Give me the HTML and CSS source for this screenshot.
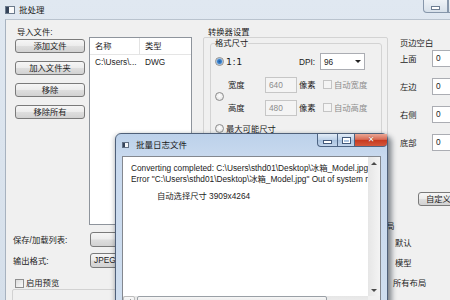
FILE: index.html
```html
<!DOCTYPE html>
<html lang="zh-CN">
<head>
<meta charset="utf-8">
<title>批处理</title>
<link rel="stylesheet" href="styles.css">
</head>
<body>
<div class="win">
  <div class="titlebar">
    <svg class="appicon" width="10" height="8" viewBox="0 0 10 8"><rect x="0.5" y="0.5" width="9" height="7" fill="#fafafa" stroke="#6b7a8c"/><rect x="1" y="1" width="3" height="6" fill="#34435a"/></svg>
    <span class="ttl">批处理</span>
    <div class="capbtns"><span class="cb min"><i></i></span><span class="cb max"></span></div>
  </div>
  <div class="frame">
    <div class="client">
      <div class="leftcol">
        <div class="import">导入文件:</div>
        <div class="filesrow">
          <div class="btncol">
            <button class="btn">添加文件</button>
            <button class="btn">加入文件夹</button>
            <button class="btn">移除</button>
            <button class="btn">移除所有</button>
          </div>
          <div class="list">
            <div class="lhead"><span class="c1">名称</span><span class="c2">类型</span></div>
            <div class="lrow"><span class="c1">C:\Users\...</span><span class="c2">DWG</span></div>
          </div>
        </div>
        <div class="frow"><span class="flabel">保存/加载列表:</span><button class="btn wide"></button></div>
        <div class="frow second"><span class="flabel">输出格式:</span><div class="combo wide">JPEG (*.jpg)</div></div>
        <div class="chkrow"><span class="chk"></span><span>启用预览</span></div>
        <div class="preview"></div>
      </div>

      <div class="convcol">
        <div class="clabel">转换器设置</div>
        <div class="cbox">
          <fieldset class="fmtset">
            <legend>格式尺寸</legend>
            <div class="fmt">
              <span class="radio on r1"></span>
              <span class="one">1:1</span>
              <span class="unit dpi">DPI:</span>
              <div class="dcombo">96<span class="arr"></span></div>

              <span class="radio r2"></span>
              <span class="flbl row2">宽度</span>
              <div class="dis row2">640</div>
              <span class="unit row2">像素</span>
              <span class="auto row2"><span class="chk off"></span><span class="gray">自动宽度</span></span>

              <span class="flbl row3">高度</span>
              <div class="dis row3">480</div>
              <span class="unit row3">像素</span>
              <span class="auto row3"><span class="chk off"></span><span class="gray">自动高度</span></span>

              <span class="radio r3"></span>
              <span class="maxsz">最大可能尺寸</span>
            </div>
          </fieldset>
        </div>
      </div>

      <div class="margcol">
        <div class="mlabel">页边空白</div>
        <div class="mrow first"><span class="ml">上面</span><div class="minput">0</div></div>
        <div class="mrow"><span class="ml">左边</span><div class="minput">0</div></div>
        <div class="mrow"><span class="ml">右侧</span><div class="minput">0</div></div>
        <div class="mrow"><span class="ml">底部</span><div class="minput">0</div></div>
        <button class="btn custom">自定义</button>
        <div class="layout">布局</div>
        <div class="lopt">默认</div>
        <div class="lopt">模型</div>
        <div class="lopt all">所有布局</div>
      </div>
    </div>
  </div>
</div>

<div class="log">
  <div class="lt">
    <svg class="appicon" width="7" height="6" viewBox="0 0 7 6"><rect x="0.5" y="0.5" width="6" height="5" fill="#f4f6f8" stroke="#5f6f84"/><rect x="1" y="1" width="2" height="4" fill="#34435a"/></svg>
    <span class="ltitle">批量日志文件</span>
    <div class="lcaps">
      <span class="lc lmin"><i></i></span>
      <span class="lc lmax"><i></i></span>
      <span class="lc lclose">✕</span>
    </div>
  </div>
  <div class="tbox">
    <div class="txt">
      <div class="ln">Converting completed: C:\Users\sthd01\Desktop\冰箱_Model.jpg</div>
      <div class="ln">Error "C:\Users\sthd01\Desktop\冰箱_Model.jpg" Out of system resources</div>
      <div class="ln sub">自动选择尺寸 3909x4264</div>
    </div>
    <div class="vscroll">
      <span class="sbtn"><i class="up"></i></span>
      <span class="strack"></span>
      <span class="sbtn"><i class="down"></i></span>
    </div>
    <div class="hscroll">
      <span class="sbtn h"><i class="left"></i></span>
      <span class="hthumb"><i></i></span>
    </div>
    <div class="corner"></div>
  </div>
</div>
</body>
</html>
```
FILE: styles.css
```css
* { box-sizing: border-box; }
html, body { margin: 0; padding: 0; }
body {
  width: 450px; height: 300px; overflow: hidden; position: relative;
  background: #f0f0f0;
  font-family: "Liberation Sans", "Noto Sans CJK SC", sans-serif;
  font-size: 8.3px; line-height: 10px; color: #1c1c1c;
}
.win {
  width: 450px; height: 300px; overflow: hidden;
  display: flex; flex-direction: column;
  background: linear-gradient(#e0e8f1, #d5dfea);
}
.titlebar { height: 19px; flex: none; display: flex; align-items: center; padding-left: 5px; }
.appicon { display: block; flex: none; }
.ttl { margin-left: 4px; font-size: 8.5px; color: #202020; }
.capbtns { margin-left: auto; margin-right: -23px; align-self: flex-start; display: flex; height: 13px; }
.cb {
  display: flex; align-items: flex-end; justify-content: center; padding-bottom: 3px;
  height: 13px; width: 25px; border: 1px solid #8797ab; border-top: none;
  background: linear-gradient(#eef2f7, #d7e0ea);
}
.cb.min { border-radius: 0 0 0 4px; }
.cb.min i { display: block; width: 7px; height: 2px; background: #fff; outline: 1px solid #6d7d92; }

.frame { flex: 1; display: flex; padding-left: 5px; min-height: 0; }
.client {
  flex: 1; display: flex; min-width: 0;
  background: #f0f0f0;
  border-left: 1px solid #a7b2bf; border-top: 1px solid #b9c3ce;
}

/* left column */
.leftcol { width: 191px; flex: none; padding-left: 7px; display: flex; flex-direction: column; }
.import { margin-top: 7px; height: 10px; padding-left: 4px; }
.filesrow { display: flex; gap: 4px; padding-left: 2px; height: 188px; flex: none; }
.btncol { width: 70px; flex: none; display: flex; flex-direction: column; gap: 8px; padding-top: 2px; }
.btn {
  height: 14px; padding: 0; margin: 0;
  font: inherit; color: #1c1c1c;
  border: 1px solid #7a7a7a; border-radius: 3px;
  background: linear-gradient(#f6f6f6, #ececec 48%, #dedede 52%, #d2d2d2);
}
.list { width: 103px; flex: none; background: #fff; border: 1px solid #8e949c; }
.lhead { display: flex; height: 17px; align-items: center; border-bottom: 1px solid #e5e5e5; }
.lrow { display: flex; height: 14px; align-items: center; }
.c1 { width: 50px; padding-left: 5px; flex: none; white-space: nowrap; }
.lhead .c1 { border-right: 1px solid #e3e3e3; height: 17px; line-height: 17px; }
.c2 { padding-left: 5px; }
.frow { display: flex; align-items: center; height: 15px; margin-top: 7px; flex: none; }
.frow.second { margin-top: 6px; }
.flabel { width: 77px; flex: none; }
.wide { width: 110px; height: 15px; flex: none; }
.combo {
  border: 1px solid #7a7a7a; border-radius: 3px; padding-left: 3px; line-height: 13px;
  background: linear-gradient(#f6f6f6, #ececec 48%, #dedede 52%, #d2d2d2);
  white-space: nowrap;
}
.chkrow { display: flex; align-items: center; gap: 2px; margin-top: 10px; padding-left: 2px; height: 10px; flex: none; }
.chk {
  display: block; width: 9px; height: 9px; flex: none;
  border: 1px solid #8f8f8f;
  background: linear-gradient(135deg, #dcdcdc, #fbfbfb);
}
.chk.off { border-color: #c4c4c4; background: #f4f4f4; }
.preview { margin-top: 1px; margin-left: -1px; height: 20px; border: 1px solid #d2d2d2; border-radius: 2px; flex: none; }

/* converter column */
.convcol { width: 185px; flex: none; margin-left: 6px; display: flex; flex-direction: column; }
.clabel { margin-top: 7px; height: 10px; padding-left: 5px; }
.cbox { border: 1px solid #d3d3d3; border-radius: 2px; height: 220px; padding: 0 5px 0 6px; }
.fmtset { margin: 0; padding: 5px 4px 30px 4px; border: 1px solid #d3d3d3; border-radius: 3px; min-width: 0; }
.fmtset legend { padding: 0; height: 10px; line-height: 10px; }
.fmt {
  display: grid;
  grid-template-columns: 11px 39px 34px 21px 1fr;
  grid-template-rows: 17px 17px 17px 13px;
  row-gap: 6px; align-items: center;
}
.radio {
  display: block; width: 9px; height: 9px; border-radius: 50%;
  border: 1px solid #8c8c8c;
  background: radial-gradient(circle at 50% 40%, #ffffff, #dcdcdc);
}
.radio.on { background: radial-gradient(circle, #1f5fa8 0, #3d83cc 2px, #9cc1e6 3px, #f2f2f2 3.5px, #e0e0e0); }
.r1 { grid-column: 1; grid-row: 1; }
.r2 { grid-column: 1; grid-row: 2 / 4; }
.r3 { grid-column: 1; grid-row: 4; }
.one { grid-column: 2; grid-row: 1; font-family: "DejaVu Sans", sans-serif; font-size: 9.5px; letter-spacing: 0.5px; }
.dpi { grid-column: 4; grid-row: 1; }
.unit { white-space: nowrap; }
.dcombo {
  grid-column: 5; grid-row: 1; width: 45px; height: 17px;
  display: flex; align-items: center; justify-content: space-between;
  padding: 0 3px 0 3px;
  background: #fff; border: 1px solid #abadb3;
}
.arr { width: 0; height: 0; border-left: 3px solid transparent; border-right: 3px solid transparent; border-top: 3px solid #222; }
.row2 { grid-row: 2; }
.row3 { grid-row: 3; }
.flbl { grid-column: 2; padding-left: 2px; }
.dis {
  grid-column: 3;
  width: 32px; height: 16px; padding: 2px 3px; line-height: 10px;
  background: #f4f4f4; border: 1px solid #c6c6c6; color: #8c8c8c;
}
.unit.row2, .unit.row3 { grid-column: 4; }
.auto { grid-column: 5; display: flex; align-items: center; gap: 2px; padding-left: 3px; white-space: nowrap; }
.gray { color: #8d8d8d; }
.maxsz { grid-column: 2 / 6; grid-row: 4; }

/* margins column */
.margcol { flex: 1; min-width: 0; display: flex; flex-direction: column; }
.mlabel { margin-top: 18px; padding-left: 12px; height: 10px; }
.mrow { display: flex; align-items: center; height: 17px; margin-top: 11px; padding-left: 12px; }
.mrow.first { margin-top: 2px; }
.ml { width: 32px; flex: none; }
.minput {
  width: 40px; height: 17px; flex: none; padding: 2px 3px; line-height: 10px;
  background: #fff; border: 1px solid #abadb3;
}
.custom { margin-top: 41px; margin-left: 30px; width: 40px; flex: none; text-align: left; padding-left: 7px; }
.layout { margin-top: 15px; margin-left: -10px; height: 10px; }
.lopt { margin-top: 7px; padding-left: 7px; height: 10px; }
.lopt + .lopt { margin-top: 10px; }
.lopt.all { padding-left: 5px; }

/* log window */
.log {
  position: absolute; left: 115px; top: 133px; width: 273px; height: 182px;
  display: flex; flex-direction: column;
  border: 1px solid #4f6079; border-radius: 6px 6px 0 0;
  background: linear-gradient(#bcd1ea, #c8d9ee 22px, #cfdeef);
  box-shadow: 4px 3px 5px rgba(20, 30, 45, 0.45), -1px 1px 4px rgba(20, 30, 45, 0.25);
}
.lt { height: 22px; flex: none; display: flex; align-items: center; padding-left: 6px; }
.ltitle { margin-left: 7px; color: #1a1a1a; font-size: 8.5px; }
.lcaps { margin-left: auto; align-self: flex-start; display: flex; height: 13px; }
.lc {
  display: flex; align-items: center; justify-content: center;
  height: 13px; border: 1px solid #4d6483; border-top: none; border-left: none;
  background: linear-gradient(#e2ecf7, #bcd0e7 50%, #a8c1de 51%, #c3d6ec);
}
.lmin { width: 21px; border-left: 1px solid #4d6483; border-radius: 0 0 0 4px; align-items: flex-end; padding-bottom: 3px; }
.lmin i { display: block; width: 7px; height: 2px; background: #fff; outline: 1px solid #43597a; }
.lmax { width: 17px; }
.lmax i { display: block; width: 7px; height: 5px; border: 1px solid #fff; border-top-width: 2px; outline: 1px solid #43597a; }
.lclose {
  width: 32px; border-right: none; border-radius: 0 0 4px 0;
  background: linear-gradient(#eaa795, #d86b55 45%, #c7391f 52%, #d4583c);
  color: #fff; font-family: "DejaVu Sans", sans-serif; font-size: 8px; font-weight: bold;
  text-shadow: 0 0 1px #6a1a0c;
}
.tbox {
  flex: 1; margin: 0 6px; min-height: 0;
  border: 1px solid #84888f; background: #fff;
  display: grid; grid-template-columns: 1fr 12px; grid-template-rows: 139px 12px 1fr;
}
.txt { grid-column: 1; grid-row: 1; padding: 6px 0 0 8px; overflow: hidden; min-width: 0; }
.ln { white-space: nowrap; line-height: 11px; }
.ln.sub { margin-top: 6px; padding-left: 26px; }
.vscroll { grid-column: 2; grid-row: 1; display: flex; flex-direction: column; background: linear-gradient(to right, #e6e6e6, #f4f4f4); }
.strack { flex: 1; }
.sbtn { display: flex; align-items: center; justify-content: center; width: 12px; height: 12px; flex: none; }
.sbtn i { width: 0; height: 0; display: block; }
.sbtn .up { border-left: 3px solid transparent; border-right: 3px solid transparent; border-bottom: 3px solid #4a4a4a; }
.sbtn .down { border-left: 3px solid transparent; border-right: 3px solid transparent; border-top: 3px solid #4a4a4a; }
.sbtn .left { border-top: 3px solid transparent; border-bottom: 3px solid transparent; border-right: 3px solid #4a4a4a; }
.hscroll { grid-column: 1; grid-row: 2; display: flex; background: linear-gradient(#e6e6e6, #f4f4f4); min-width: 0; }
.sbtn.h { border: 1px solid #bdbdbd; border-radius: 2px; background: linear-gradient(#f8f8f8, #e2e2e2); }
.hthumb {
  margin-left: 2px; width: 190px; display: flex; align-items: center; justify-content: center;
  border: 1px solid #9aa0a6; border-radius: 2px; background: linear-gradient(#f6f6f6, #dedede);
}
.hthumb i { display: block; width: 5px; height: 5px; border-left: 1px solid #777; border-right: 1px solid #777; }
.corner { grid-column: 2; grid-row: 2; background: #f0f0f0; }
```
